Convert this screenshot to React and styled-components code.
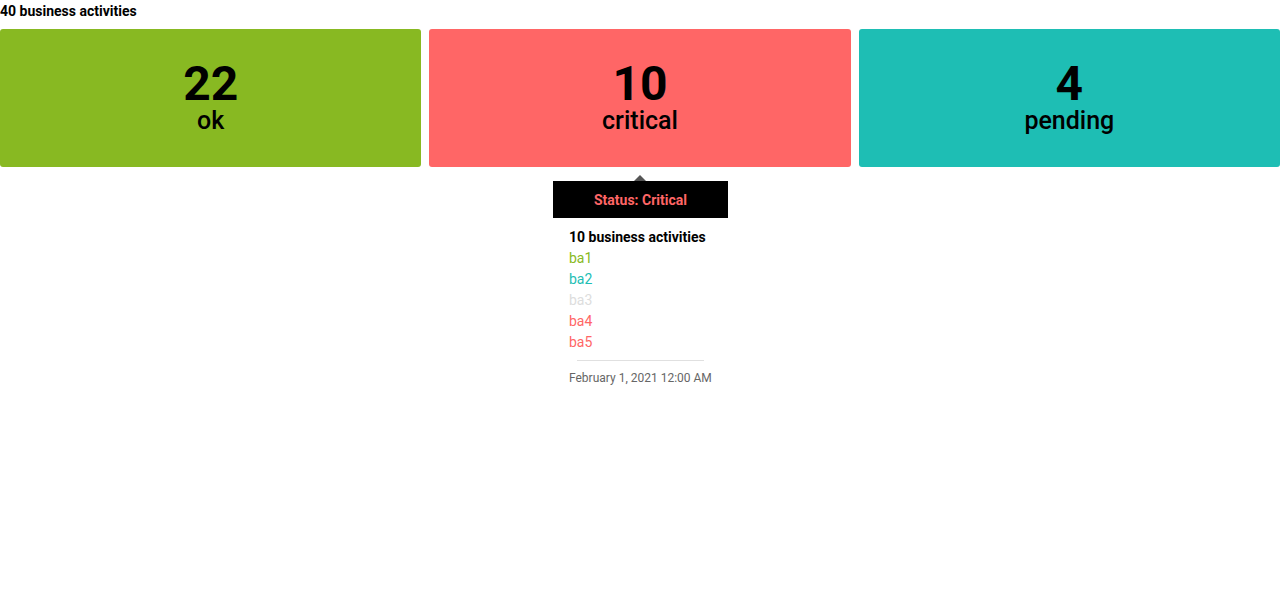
import styled, { createGlobalStyle } from "styled-components";

const GlobalStyle = createGlobalStyle`
  body {
    margin: 0;
    font-family: Roboto, "Noto Sans", sans-serif;
    background: #fff;
    color: #000;
  }
`;

const Page = styled.div`
  display: flex;
  flex-direction: column;
`;

const Title = styled.div`
  font-size: 14px;
  font-weight: 700;
  line-height: 22px;
  height: 22px;
  margin-bottom: 7px;
`;

const Cards = styled.div`
  display: grid;
  grid-template-columns: repeat(3, 1fr);
  align-items: start;
  gap: 8px;
`;

const Column = styled.div`
  display: flex;
  flex-direction: column;
  align-items: center;
`;

const Card = styled.div`
  align-self: stretch;
  box-sizing: border-box;
  height: 138px;
  padding-top: 32px;
  border-radius: 3px;
  background: ${(p) => p.$color};
  display: flex;
  flex-direction: column;
  align-items: center;
`;

const Count = styled.div`
  font-size: 48px;
  font-weight: 700;
  line-height: 46px;
`;

const Label = styled.div`
  font-size: 25px;
  font-weight: 500;
  line-height: 26px;
  margin-top: 1px;
`;

const Tooltip = styled.div`
  margin: 8px 0 0 1px;
  width: 175px;
  display: flex;
  flex-direction: column;
`;

const Arrow = styled.div`
  align-self: center;
  width: 0;
  height: 0;
  border-left: 6px solid transparent;
  border-right: 6px solid transparent;
  border-bottom: 6px solid #555;
`;

const Header = styled.div`
  height: 37px;
  background: #000;
  color: #ff6666;
  font-size: 14px;
  font-weight: 700;
  display: flex;
  align-items: center;
  justify-content: center;
`;

const Body = styled.div`
  padding: 9px 16px 0;
  display: flex;
  flex-direction: column;
`;

const Heading = styled.div`
  font-size: 14px;
  font-weight: 700;
  line-height: 21px;
`;

const Item = styled.div`
  font-size: 14px;
  line-height: 21px;
  color: ${(p) => p.$color};
`;

const Divider = styled.div`
  height: 1px;
  background: #e0e0e0;
  margin: 7px 8px 8px;
`;

const DateText = styled.div`
  font-size: 12px;
  line-height: 18px;
  color: #666;
`;

const cards = [
  { count: 22, label: "ok", color: "#88b922" },
  { count: 10, label: "critical", color: "#ff6666", tooltip: true },
  { count: 4, label: "pending", color: "#1ebeb4" },
];

const items = [
  { name: "ba1", color: "#88b922" },
  { name: "ba2", color: "#1ebeb4" },
  { name: "ba3", color: "#dddddd" },
  { name: "ba4", color: "#ff6666" },
  { name: "ba5", color: "#ff6666" },
];

export default function App() {
  return (
    <Page>
      <GlobalStyle />
      <Title>40 business activities</Title>
      <Cards>
        {cards.map((c) => (
          <Column key={c.label}>
            <Card $color={c.color}>
              <Count>{c.count}</Count>
              <Label>{c.label}</Label>
            </Card>
            {c.tooltip ? (
              <Tooltip>
                <Arrow />
                <Header>Status: Critical</Header>
                <Body>
                  <Heading>10 business activities</Heading>
                  {items.map((i) => (
                    <Item key={i.name} $color={i.color}>
                      {i.name}
                    </Item>
                  ))}
                  <Divider />
                  <DateText>February 1, 2021 12:00 AM</DateText>
                </Body>
              </Tooltip>
            ) : null}
          </Column>
        ))}
      </Cards>
    </Page>
  );
}
